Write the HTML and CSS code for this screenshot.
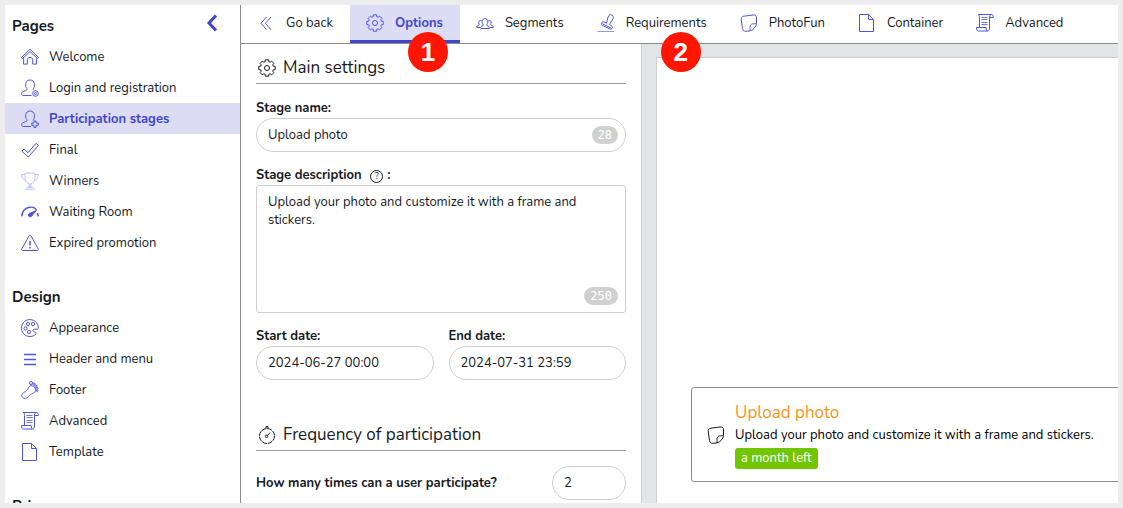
FILE: index.html
```
<!DOCTYPE html>
<html lang="en">
<head>
  <meta charset="UTF-8" />
  <meta name="viewport" content="width=device-width, initial-scale=1.0" />
  <title>Participation stages - Options</title>
  <link rel="stylesheet" href="styles.css">
</head>
<body>
  <svg class="sprite" aria-hidden="true">
    <symbol id="home" viewBox="0 0 18 18"><path d="M.6 9.300 9 1.200l8.400 8.100c.3.800-.6 1.400-1.200.9L9 3.600l-7.200 6.600c-.7.5-1.500-.1-1.200-.9zM2.600 10.200v5.900h3.700v-4.300c0-3.200 5.400-3.200 5.400 0v4.300h3.700v-5.900"/></symbol>
    <symbol id="user-at" viewBox="0 0 18 18"><path d="M10.500 16.500H2.200C.8 16.500.4 15 .8 13.800c.5-1.600 3.600-1.700 5-2.900.5-.6.3-1.100-.3-1.800C4.200 7.600 3.700 1 9 1s5 6.400 3.600 8.300c-.5.700-.6 1.100-.2 1.600"/><circle cx="14.500" cy="14.500" r="2.800"/><circle cx="14.500" cy="14.500" r="1"/></symbol>
    <symbol id="user-plus" viewBox="0 0 18 18"><path d="M10 16.500H2.200C.8 16.500.4 15 .8 13.800c.5-1.600 3.600-1.700 5-2.900.5-.6.3-1.100-.3-1.800C4.200 7.600 3.700 1 9 1s5 6.400 3.600 8.300c-.5.700-.6 1.100-.2 1.600"/><path d="M13 11h2v2h2.300v2.300H15v2.200h-2v-2.200h-2.200V13H13z"/></symbol>
    <symbol id="check" viewBox="0 0 18 18"><path d="M.8 10.200 3 8l4 3.700L15.100 2.300l2.300 2.100L7.300 16z"/></symbol>
    <symbol id="cup" viewBox="0 0 18 18"><path d="M4 1h10v5c0 3-2 5.500-5 6-3-.5-5-3-5-6zM4 2.500H.8c0 3 1.200 5.500 4.200 6M14 2.500h3.200c0 3-1.200 5.500-4.200 6M8 12v3h2v-3M5.500 15.300h7M4 17.200h10"/></symbol>
    <symbol id="gauge" viewBox="0 0 18 18"><path d="M.8 13.300C1.600 3.300 13 1.700 15.500 7.500M16.500 10l.7 3.300" stroke-width="1.500"/><path class="solid" d="M15.300 7.600 9.500 10c-2.600.2-3 3.500-.5 3.700 1.700.1 2.200-1 2.700-2z"/></symbol>
    <symbol id="warning" viewBox="0 0 18 18"><path d="M9 1.200c.5 0 .8.300 1 .7l7.300 13.200c.4.800 0 1.400-.8 1.400h-15c-.8 0-1.200-.6-.8-1.400L8 1.900c.2-.4.500-.7 1-.7z"/><path d="M9 7v4.500M9 13v1.500" stroke-width="1.500"/></symbol>
    <symbol id="palette" viewBox="0 0 18 18"><path d="M17.400 9.500A8.500 8.500 0 1 0 15 15c.5-1-.3-1.700-1.500-2-1.500-.5-2-1.500-1-2.500 1.500-1 3.600.8 4.900-1z"/><circle cx="7" cy="5" r="1.600"/><circle cx="12" cy="5" r="1.600"/><circle cx="4.500" cy="9.500" r="1.600"/><circle cx="8" cy="13" r="1.600"/></symbol>
    <symbol id="menu" viewBox="0 0 18 18"><path d="M3 4.500h12M3 9.500h12M3 14.500h12" stroke-width="1.500"/></symbol>
    <symbol id="foot" viewBox="0 0 18 18"><path d="M7.500 6.800C8.500 4 11.500 4.300 13.500 6.500c2.200 2.500 1 4.500-1 5.500-1.500.8-2.900 1.300-4.300 2.800C6.800 16.500 4.500 18.500 1.800 16.800c-2-1.800-.8-3.900 1-5.200C5 10 6.600 9 7.500 6.800z"/><circle cx="10" cy="2" r="1.500"/><circle cx="12.900" cy="3" r="1.100"/><circle cx="14.800" cy="5" r="1.100"/><circle cx="16" cy="7.300" r="1"/><circle cx="16.100" cy="9.600" r=".8"/></symbol>
    <symbol id="scroll" viewBox="0 0 18 18"><path d="M3.500 13.500V3.500c0-1.800-.5-3-1.500-3h13.500c-1.300.2-2 1.300-2 2.500v11c0 1.800-.6 3-2 3H2.300c-1.200 0-1.800-1.200-1.800-3.500h9.700c0 2.300.3 3.500 1.300 3.500M15.500.5c1.300 0 2 1 1.800 3h-3.800"/><path d="M5.500 3.500h6M5.500 5.500h6M5.500 8.500h6M5.500 10.500h6" opacity=".8"/></symbol>
    <symbol id="page" viewBox="0 0 18 18"><path d="M1.500.5h9l5 5v12h-14zM10.500.5v5h5"/></symbol>
    <symbol id="back" viewBox="0 0 18 18"><path d="M9.500 3 4 9.300l5.500 6.300M14 3 8.500 9.300l5.500 6.300"/></symbol>
    <symbol id="gear" viewBox="0 0 18 18"><path d="M15.300 7.200 17.200 7.400 17.200 10.600 15.300 10.800 14.800 12.200 15.900 13.600 13.600 15.900 12.200 14.800 10.800 15.300 10.600 17.200 7.400 17.200 7.200 15.300 5.800 14.800 4.400 15.900 2.100 13.600 3.200 12.200 2.700 10.800.8 10.600.8 7.400 2.700 7.200 3.200 5.800 2.100 4.400 4.400 2.100 5.800 3.200 7.200 2.700 7.400.8 10.600.8 10.800 2.700 12.200 3.200 13.600 2.100 15.900 4.400 14.800 5.800z"/><circle cx="9" cy="9" r="2.500"/></symbol>
    <symbol id="people" viewBox="0 0 18 18"><path d="M4.800 14.500c-.5-2 .8-2.500 2.200-2.900.5-.2.300-.7-.1-1.200C5.600 8.500 6 4.600 9 4.600s3.400 3.900 2.100 5.800c-.4.500-.6 1-.1 1.200 1.400.4 2.700.9 2.200 2.900z"/><path d="M5.600 6.800c-2.300-.8-3.400.9-2.500 3.200.3.700.1 1-.6 1.300-1 .4-1.700.6-1.700 2.200h3.400M12.400 6.800c2.300-.8 3.400.9 2.500 3.200-.3.700-.1 1 .6 1.300 1 .4 1.700.6 1.700 2.200h-3.400"/></symbol>
    <symbol id="stamp" viewBox="0 0 18 18"><path d="M4.800 8.800c.3-1 1.200-1.300 2.200-.9l2.600 1.300c.6-2.200.6-3.800 1.500-6.200.8-2 2.100-2.600 3.700-2 1.600.7 1.900 2.100 1.200 3.700-1 2.100-2.200 3.600-3.500 5.800l1.800 1.200c1.100.7 1.300 1.500.9 2.500-.4.900-1.400 1.200-2.500.7l-7.500-3.600c-1-.5-1.200-1.400-.4-2.500zM5.300 9.700l8.800 4.400"/><path d="M.5 17.500h16.500" opacity=".6"/></symbol>
    <symbol id="sticker" viewBox="0 0 18 18"><path d="M3.800 2.200 13 1c2.500-.3 3.500 1 3.500 3v5.500c-.3 3.200-3.300 6.700-6.500 7.400l-4.200.4c-2 .1-3-.8-3.300-2.800L1.300 6C1 3.500 1.800 2.500 3.800 2.200zM10 16.900c.3-1.500-.4-3.200.2-5 .5-1.400 1.800-2.200 3.300-2.100 1.500 0 2.600-.3 3-1.200"/></symbol>
    <symbol id="timer" viewBox="0 0 18 18"><circle cx="9" cy="10" r="7.500" stroke-dasharray="5 .9"/><path d="M8 2.500v-2h2v2M9.300 9.500 12 6.800"/><circle cx="8.500" cy="10.300" r="1.200"/></symbol>
  </svg>

  <div class="app">
    <nav class="sidebar">
      <button class="collapse" type="button" aria-label="Collapse menu">
        <svg viewBox="0 0 12 18"><path d="M10 1.500 3 9l7 7.500"/></svg>
      </button>

      <section class="menu-group">
        <h2>Pages</h2>
        <ul>
          <li><a href="#"><svg class="icon"><use href="#home"/></svg>Welcome</a></li>
          <li><a href="#"><svg class="icon"><use href="#user-at"/></svg>Login and registration</a></li>
          <li><a href="#" class="active"><svg class="icon"><use href="#user-plus"/></svg>Participation stages</a></li>
          <li><a href="#"><svg class="icon"><use href="#check"/></svg>Final</a></li>
          <li><a href="#"><svg class="icon faded"><use href="#cup"/></svg>Winners</a></li>
          <li><a href="#"><svg class="icon"><use href="#gauge"/></svg>Waiting Room</a></li>
          <li><a href="#"><svg class="icon"><use href="#warning"/></svg>Expired promotion</a></li>
        </ul>
      </section>

      <section class="menu-group">
        <h2>Design</h2>
        <ul>
          <li><a href="#"><svg class="icon"><use href="#palette"/></svg>Appearance</a></li>
          <li><a href="#"><svg class="icon"><use href="#menu"/></svg>Header and menu</a></li>
          <li><a href="#"><svg class="icon"><use href="#foot"/></svg>Footer</a></li>
          <li><a href="#"><svg class="icon"><use href="#scroll"/></svg>Advanced</a></li>
          <li><a href="#"><svg class="icon"><use href="#page"/></svg>Template</a></li>
        </ul>
      </section>

      <section class="menu-group">
        <h2>Privacy</h2>
      </section>
    </nav>

    <div class="main">
      <nav class="tabs">
        <a href="#" class="tab"><svg class="icon"><use href="#back"/></svg>Go back</a>
        <a href="#" class="tab active"><svg class="icon"><use href="#gear"/></svg>Options<span class="marker marker-options">1</span></a>
        <a href="#" class="tab"><svg class="icon"><use href="#people"/></svg>Segments</a>
        <a href="#" class="tab"><svg class="icon"><use href="#stamp"/></svg>Requirements<span class="marker marker-requirements">2</span></a>
        <a href="#" class="tab"><svg class="icon"><use href="#sticker"/></svg>PhotoFun</a>
        <a href="#" class="tab"><svg class="icon"><use href="#page"/></svg>Container</a>
        <a href="#" class="tab"><svg class="icon"><use href="#scroll"/></svg>Advanced</a>
      </nav>

      <div class="workspace">
        <form class="settings">
          <h3><svg class="icon"><use href="#gear"/></svg>Main settings</h3>

          <div class="field">
            <label for="stage-name">Stage name:</label>
            <div class="control">
              <input type="text" id="stage-name" value="Upload photo">
              <span class="counter">28</span>
            </div>
          </div>

          <div class="field">
            <label for="stage-description">Stage description <span class="help">?</span>:</label>
            <div class="control">
              <textarea id="stage-description">Upload your photo and customize it with a frame and stickers.</textarea>
              <span class="counter">250</span>
            </div>
          </div>

          <div class="dates">
            <div class="field">
              <label for="start-date">Start date:</label>
              <input type="text" id="start-date" value="2024-06-27 00:00">
            </div>
            <div class="field">
              <label for="end-date">End date:</label>
              <input type="text" id="end-date" value="2024-07-31 23:59">
            </div>
          </div>

          <h3 class="frequency"><svg class="icon"><use href="#timer"/></svg>Frequency of participation</h3>

          <div class="inline-field">
            <label for="times">How many times can a user participate?</label>
            <input type="text" id="times" value="2">
          </div>
        </form>

        <div class="preview">
          <div class="canvas">
            <article class="stage-card">
              <svg class="icon"><use href="#sticker"/></svg>
              <div>
                <h4>Upload photo</h4>
                <p>Upload your photo and customize it with a frame and stickers.</p>
                <span class="tag">a month left</span>
              </div>
            </article>
          </div>
        </div>
      </div>
    </div>
  </div>
</body>
</html>
```
FILE: styles.css
```
:root {
  --primary: #4046ca;
  --icon: #4f54dc;
  --primary-light: #dcdcf4;
  --text: #16191f;
  --line: #8a8b8d;
  --input-border: #cfcfd1;
  --frame: #ededed;
}

* {
  box-sizing: border-box;
  margin: 0;
  padding: 0;
}

body {
  font-family: "Nunito", "Open Sans", sans-serif;
  font-size: 13px;
  line-height: 18px;
  color: var(--text);
  background: #fff;
}

ul {
  list-style: none;
}

a {
  color: inherit;
  text-decoration: none;
}

.sprite {
  position: absolute;
  width: 0;
  height: 0;
}

.icon {
  width: 18px;
  height: 18px;
  flex-shrink: 0;
  overflow: visible;
  fill: none;
  stroke: var(--icon);
  stroke-width: 1;
  stroke-linejoin: round;
}

.icon.faded {
  opacity: 0.35;
}

.solid {
  fill: var(--icon);
}

.app {
  display: flex;
  height: 100vh;
  border: 5px solid var(--frame);
  overflow: hidden;
}

/* Sidebar */
.sidebar {
  position: relative;
  width: 236px;
  flex-shrink: 0;
  padding-top: 5px;
  border-right: 1px solid var(--line);
  overflow: hidden;
}

.menu-group {
  margin-bottom: 23px;
}

.menu-group h2 {
  height: 31px;
  padding-left: 7px;
  font-size: 15px;
  line-height: 33px;
}

.menu-group a {
  display: flex;
  align-items: center;
  gap: 10px;
  height: 31px;
  padding-left: 16px;
}

.menu-group a.active {
  background: var(--primary-light);
  color: var(--primary);
  font-weight: 700;
}

.collapse {
  position: absolute;
  top: 9px;
  right: 22px;
  width: 12px;
  height: 18px;
  border: 0;
  background: none;
  cursor: pointer;
}

.collapse svg {
  display: block;
  fill: none;
  stroke: var(--primary);
  stroke-width: 3;
}

/* Tabs */
.main {
  flex: 1;
  min-width: 0;
  display: flex;
  flex-direction: column;
}

.tabs {
  display: flex;
  height: 39px;
  flex-shrink: 0;
  border-bottom: 1px solid var(--line);
}

.tab {
  position: relative;
  display: flex;
  align-items: center;
  gap: 11px;
  padding: 0 17px 0 16px;
  border-bottom: 3px solid transparent;
  white-space: nowrap;
}

.tab.active {
  background: var(--primary-light);
  border-bottom-color: var(--primary);
  color: var(--primary);
  font-weight: 700;
}

.marker {
  position: absolute;
  top: 27px;
  z-index: 1;
  width: 40px;
  height: 40px;
  border-radius: 50%;
  background: #ff1600;
  color: #fff;
  font: bold 26px/40px "Liberation Sans", sans-serif;
  text-align: center;
}

.marker-options {
  right: 12px;
}

.marker-requirements {
  right: 23px;
}

/* Settings form */
.workspace {
  flex: 1;
  min-height: 0;
  display: flex;
}

.settings {
  width: 401px;
  flex-shrink: 0;
  padding: 10px 15px 0;
  border-right: 1px solid var(--input-border);
  overflow: hidden;
}

.settings h3 {
  display: flex;
  align-items: center;
  gap: 7px;
  height: 30px;
  margin-bottom: 14px;
  padding: 0 2px 1px;
  border-bottom: 1px solid #9b9b9d;
  font-size: 17px;
  font-weight: 400;
}

.settings h3 .icon,
.stage-card .icon {
  stroke: var(--text);
}

.field {
  margin-bottom: 13px;
}

label {
  display: block;
  height: 20px;
  line-height: 20px;
  font-weight: 700;
}

.control {
  position: relative;
}

input,
textarea {
  display: block;
  width: 100%;
  border: 1px solid var(--input-border);
  background: #fff;
  color: var(--text);
  font: inherit;
}

input {
  height: 34px;
  padding: 0 11px;
  border-radius: 17px;
}

textarea {
  height: 128px;
  padding: 7px 30px 7px 11px;
  border-radius: 3px;
  resize: none;
}

.counter {
  position: absolute;
  right: 8px;
  bottom: 8px;
  padding: 0 6px;
  border-radius: 9px;
  background: #d0d0d0;
  color: #fff;
  font: 12px/18px "DejaVu Sans Mono", monospace;
}

.help {
  display: inline-block;
  width: 13px;
  height: 13px;
  margin: 0 4px 0 5px;
  border: 1px solid var(--text);
  border-radius: 50%;
  font-size: 9px;
  font-weight: 400;
  line-height: 11px;
  text-align: center;
}

.dates {
  display: grid;
  grid-template-columns: 1fr 1fr;
  gap: 15px;
}

.settings .frequency {
  margin-top: 28px;
  margin-bottom: 15px;
}

.inline-field {
  display: flex;
  align-items: center;
  justify-content: space-between;
}

.inline-field input {
  width: 74px;
}

/* Preview */
.preview {
  flex: 1;
  min-width: 0;
  padding: 13px 0 0 14px;
  background: #e3e4e6;
  overflow: hidden;
}

.canvas {
  width: calc(100% + 40px);
  height: 100%;
  padding: 329px 0 0 34px;
  border-top: 1px solid var(--input-border);
  border-left: 1px solid var(--input-border);
  background: #fff;
}

.stage-card {
  display: flex;
  align-items: center;
  gap: 10px;
  height: 95px;
  padding-left: 15px;
  border: 1px solid var(--line);
  border-radius: 3px;
  color: #000;
}

.stage-card h4 {
  color: #f7941d;
  font-size: 17px;
  font-weight: 400;
  line-height: 24px;
}

.stage-card p {
  line-height: 20px;
  white-space: nowrap;
}

.tag {
  display: block;
  width: fit-content;
  margin-top: 3px;
  padding: 0 6px;
  border-radius: 3px;
  background: #72c600;
  color: #fff;
  line-height: 21px;
}
```
